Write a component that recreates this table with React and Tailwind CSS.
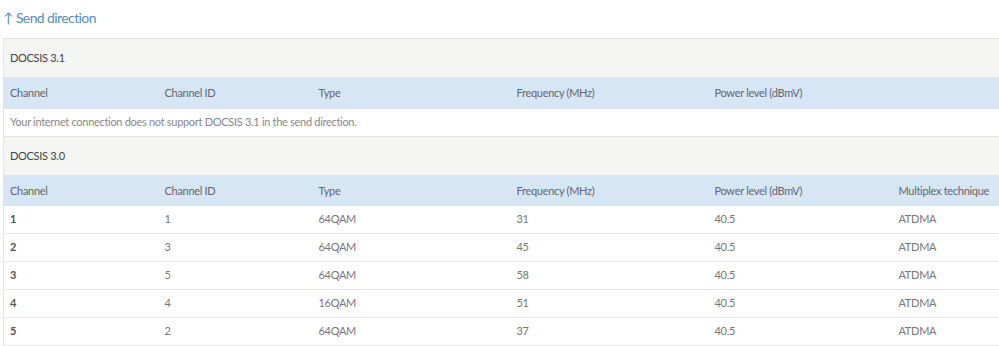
import React from 'react';

const cols = ['Channel', 'Channel ID', 'Type', 'Frequency (MHz)', 'Power level (dBmV)'];

const rows = [
  ['1', '1', '64QAM', '31', '40.5', 'ATDMA'],
  ['2', '3', '64QAM', '45', '40.5', 'ATDMA'],
  ['3', '5', '64QAM', '58', '40.5', 'ATDMA'],
  ['4', '4', '16QAM', '51', '40.5', 'ATDMA'],
  ['5', '2', '64QAM', '37', '40.5', 'ATDMA'],
];

function Cols() {
  return (
    <colgroup>
      <col className="w-[155px]" />
      <col className="w-[154px]" />
      <col className="w-[198px]" />
      <col className="w-[198px]" />
      <col className="w-[184px]" />
      <col className="w-[160px]" />
    </colgroup>
  );
}

export default function App() {
  return (
    <div className="w-[999px] h-[346px] overflow-hidden bg-white text-[#555] font-['Lato','Open_Sans',sans-serif] text-[11px] tracking-[-0.3px]">
      <h2 className="h-[38px] pl-[3px] pt-[8px] text-[14px] tracking-[-0.6px] text-[#5a8cb6] leading-[20px]">
        ↑ Send direction
      </h2>

      <div className="ml-[3px]">
        <table className="table-fixed w-[1049px] border-collapse border-l border-[#e4e4e4]">
          <Cols />
          <tbody>
            <tr className="h-[39px] bg-[#f5f5f4] border-t border-b border-[#e4e4e4]">
              <td colSpan={6} className="px-[6px] text-[#444]">DOCSIS 3.1</td>
            </tr>
            <tr className="h-[31px] bg-[#d6e6f4]">
              {cols.map((c) => (
                <td key={c} className="px-[6px] text-[#5f6770]">{c}</td>
              ))}
              <td />
            </tr>
            <tr className="h-[28px] bg-white">
              <td colSpan={6} className="px-[6px] text-[#888]">
                Your internet connection does not support DOCSIS 3.1 in the send direction.
              </td>
            </tr>
            <tr className="h-[39px] bg-[#f5f5f4] border-t border-b border-[#e4e4e4]">
              <td colSpan={6} className="px-[6px] text-[#444]">DOCSIS 3.0</td>
            </tr>
            <tr className="h-[30px] bg-[#d6e6f4]">
              {cols.map((c) => (
                <td key={c} className="px-[6px] text-[#5f6770]">{c}</td>
              ))}
              <td className="px-[6px] text-[#5f6770] whitespace-nowrap">Multiplex technique</td>
            </tr>
            {rows.map((r) => (
              <tr key={r[0]} className="h-[28px] border-b border-[#e8e8e8]">
                {r.map((v, i) => (
                  <td key={i} className={i === 0 ? 'px-[6px] font-bold text-[#555]' : 'px-[6px] text-[#777]'}>
                    {v}
                  </td>
                ))}
              </tr>
            ))}
          </tbody>
        </table>
      </div>
    </div>
  );
}
